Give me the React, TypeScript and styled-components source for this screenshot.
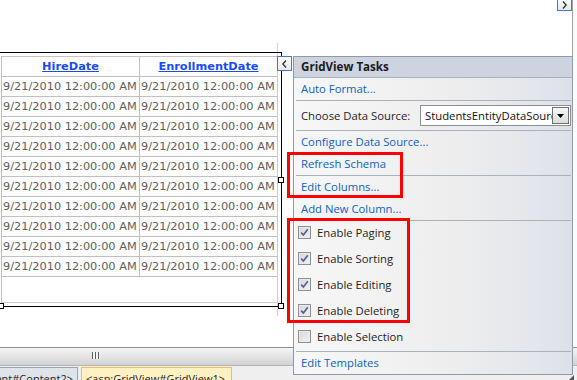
import React from "react";
import styled, { createGlobalStyle } from "styled-components";

const GlobalStyle = createGlobalStyle`
  html, body {
    margin: 0;
    padding: 0;
    background: #ffffff;
    overflow: hidden;
  }
`;

const ROWS = 10;
const DATE = "9/21/2010 12:00:00 AM";

const App: React.FunctionComponent = () => {
  return (
    <Window>
      <GlobalStyle />
      <Surface>
        <Canvas>
          <Guide />
          <Frame>
            <Table>
              <Row>
                <HeadCell>
                  <HeadLink>HireDate</HeadLink>
                </HeadCell>
                <HeadCell>
                  <HeadLink>EnrollmentDate</HeadLink>
                </HeadCell>
              </Row>
              {Array.from({ length: ROWS }).map((_, i) => (
                <Row key={i}>
                  <Cell>{DATE}</Cell>
                  <Cell>{DATE}</Cell>
                </Row>
              ))}
            </Table>
            <Handle $x="right" $y="middle" />
            <Handle $x="left" $y="bottom" />
            <Handle $x="right" $y="bottom" />
          </Frame>
          <ExpandButton>
            <Chevron dir="right" />
          </ExpandButton>
        </Canvas>
        <Gutter />
      </Surface>

      <HScroll>
        <Grip />
      </HScroll>

      <TabStrip>
        <Tab>
          <TabText>&lt;asp:Content#Content2&gt;</TabText>
        </Tab>
        <Tab $active>
          <TabText>&lt;asp:GridView#GridView1&gt;</TabText>
        </Tab>
      </TabStrip>

      <CollapseButton>
        <Chevron dir="left" />
      </CollapseButton>

      <TasksPanel>
        <PanelHeader>GridView Tasks</PanelHeader>
        <TaskLink>Auto Format...</TaskLink>
        <Separator />
        <SourceRow>
          <Label>Choose Data Source:</Label>
          <Combo>
            <ComboText>StudentsEntityDataSource</ComboText>
            <ComboButton>
              <svg width="7" height="4" viewBox="0 0 7 4">
                <path d="M0 0 H7 L3.5 4 Z" fill="#000" />
              </svg>
            </ComboButton>
          </Combo>
        </SourceRow>
        <Separator />
        <TaskLink>Configure Data Source...</TaskLink>
        <TaskLink>Refresh Schema</TaskLink>
        <Separator />
        <TaskLink>Edit Columns...</TaskLink>
        <TaskLink>Add New Column...</TaskLink>
        <Separator />
        <CheckList>
          <CheckOption label="Enable Paging" checked />
          <CheckOption label="Enable Sorting" checked />
          <CheckOption label="Enable Editing" checked />
          <CheckOption label="Enable Deleting" checked />
          <CheckOption label="Enable Selection" />
        </CheckList>
        <Separator />
        <TaskLink>Edit Templates</TaskLink>
      </TasksPanel>

      <RedBox $left={287} $top={152} $width={116} $height={46} />
      <RedBox $left={287} $top={218} $width={123} $height={105} />

      <ResizeCorner />
    </Window>
  );
};

const Chevron = ({ dir }: { dir: "left" | "right" }) => (
  <svg width="5" height="8" viewBox="0 0 5 8">
    <path
      d={dir === "left" ? "M4 0.5 L0.8 4 L4 7.5" : "M1 0.5 L4.2 4 L1 7.5"}
      fill="none"
      stroke="#2a2a2a"
      strokeWidth="1.2"
    />
  </svg>
);

const CheckOption = ({ label, checked }: { label: string; checked?: boolean }) => (
  <CheckRow>
    <CheckBox>
      {checked && (
        <svg width="9" height="9" viewBox="0 0 9 9">
          <path
            d="M1.2 4.6 L3.4 7 L7.8 1.2"
            fill="none"
            stroke="#4b5f98"
            strokeWidth="1.6"
          />
        </svg>
      )}
    </CheckBox>
    <CheckLabel>{label}</CheckLabel>
  </CheckRow>
);

const Window = styled.div`
  position: relative;
  width: 577px;
  height: 380px;
  overflow: hidden;
  display: flex;
  flex-direction: column;
  background: #ffffff;
`;

const Surface = styled.div`
  height: 347px;
  display: flex;
  flex-shrink: 0;
`;

const Canvas = styled.div`
  position: relative;
  width: 573px;
  border-right: 1px solid #a3a3a3;
  padding-top: 52px;
  box-sizing: border-box;
`;

const Gutter = styled.div`
  flex: 1;
  background: #fbfbfb;
`;

const Guide = styled.div`
  position: absolute;
  left: 277px;
  top: 43px;
  width: 1px;
  height: 273px;
  background: #dccaca;
`;

const Frame = styled.div`
  position: relative;
  width: 282px;
  height: 255px;
  box-sizing: border-box;
  border: 1px solid #000000;
  border-left: none;
  padding: 3px 0 0 1px;
`;

const Table = styled.div`
  width: 277px;
  height: 247px;
  box-sizing: border-box;
  border-top: 1px solid #cbc2c2;
  border-left: 1px solid #c0c0c0;
  border-right: 1px solid #d6c8c8;
  border-bottom: 1px solid #d6c8c8;
  font-family: "DejaVu Sans", Verdana, sans-serif;
  font-size: 11.33px;
`;

const Row = styled.div`
  display: grid;
  grid-template-columns: 138px 137px;
  height: 20px;
`;

const Cell = styled.div`
  box-sizing: border-box;
  border-bottom: 1px solid #c0c0c0;
  padding-left: 1px;
  line-height: 19px;
  color: #5e5e5e;
  white-space: nowrap;
  overflow: hidden;

  &:first-child {
    border-right: 1px solid #c0c0c0;
  }
`;

const HeadCell = styled(Cell)`
  text-align: center;
  padding-left: 0;
`;

const HeadLink = styled.span`
  color: #1a4cf5;
  font-weight: bold;
  text-decoration: underline;
`;

const Handle = styled.div<{ $x: "left" | "right"; $y: "middle" | "bottom" }>`
  position: absolute;
  width: 6px;
  height: 6px;
  box-sizing: border-box;
  border: 1px solid #000000;
  background: #ffffff;
  ${p => (p.$x === "right" ? "right: -3px;" : "left: -2px;")}
  ${p => (p.$y === "bottom" ? "bottom: -3px;" : "top: calc(50% - 3px);")}
`;

const ExpandButton = styled.div`
  position: absolute;
  left: 557px;
  top: -4px;
  width: 15px;
  height: 15px;
  box-sizing: border-box;
  border: 1px solid #4a78c0;
  background: linear-gradient(#ffffff, #e6e9ee);
  display: flex;
  align-items: center;
  justify-content: center;
  padding-top: 3px;
`;

const CollapseButton = styled.div`
  position: absolute;
  left: 277px;
  top: 56px;
  width: 15px;
  height: 15px;
  box-sizing: border-box;
  border: 1px solid #4a78c0;
  background: linear-gradient(#ffffff, #e6e9ee);
  display: flex;
  align-items: center;
  justify-content: center;
`;

const HScroll = styled.div`
  height: 19px;
  flex-shrink: 0;
  box-sizing: border-box;
  border-top: 1px solid #8e8e8e;
  border-bottom: 1px solid #b4b4b4;
  background: linear-gradient(#f4f4f4, #e4e4e4 50%, #d2d2d2);
  padding: 4px 0 0 92px;
`;

const Grip = styled.div`
  width: 8px;
  height: 7px;
  background: repeating-linear-gradient(
    to right,
    #5e5e5e 0,
    #5e5e5e 1px,
    #f4f4f4 1px,
    #f4f4f4 3px
  );
`;

const TabStrip = styled.div`
  flex: 1;
  display: flex;
  gap: 3px;
  background: #efefef;
  padding-top: 1px;
  font-family: "Open Sans", "Noto Sans", sans-serif;
  font-size: 11px;
  color: #1e1e1e;
`;

const Tab = styled.div<{ $active?: boolean }>`
  height: 22px;
  box-sizing: border-box;
  display: flex;
  justify-content: ${p => (p.$active ? "flex-start" : "flex-end")};
  overflow: hidden;
  white-space: nowrap;
  padding: 3px 4px 0 4px;
  border: 1px solid ${p => (p.$active ? "#e6c25a" : "#9da3ab")};
  background: ${p => (p.$active ? "#fff1c2" : "#dfe3ea")};
  width: ${p => (p.$active ? "151px" : "78px")};
  ${p => (p.$active ? "" : "border-left: none;")}
`;

const TabText = styled.span`
  flex-shrink: 0;
`;

const TasksPanel = styled.div`
  position: absolute;
  left: 293px;
  top: 56px;
  width: 280px;
  box-sizing: border-box;
  border: 1px solid #8e99ab;
  background: linear-gradient(
    to right,
    #f7f7f7 0%,
    #eeeeee 55%,
    #e6e8ec 80%,
    #dce1e9 100%
  );
  font-family: "Open Sans", "Noto Sans", sans-serif;
  font-size: 11.3px;
  color: #1e1e1e;
`;

const PanelHeader = styled.div`
  height: 21px;
  box-sizing: border-box;
  line-height: 20px;
  padding-left: 7px;
  background: #cdd4df;
  border-bottom: 1px solid #a8b1bf;
  font-weight: bold;
  font-size: 11.6px;
  color: #1b1b1b;
`;

const TaskLink = styled.div`
  height: 22px;
  line-height: 22px;
  padding-left: 7px;
  color: #0d63c6;
  white-space: nowrap;
`;

const Separator = styled.div`
  height: 1px;
  margin: 0 1px 0 2px;
  background: #a9b1bd;
`;

const SourceRow = styled.div`
  height: 29px;
  display: flex;
  align-items: center;
  padding: 0 1px 0 7px;
`;

const Label = styled.span`
  white-space: nowrap;
`;

const Combo = styled.div`
  margin-left: auto;
  width: 151px;
  height: 21px;
  box-sizing: border-box;
  border: 1px solid #8a8e96;
  background: #ffffff;
  display: flex;
  align-items: center;
  overflow: hidden;
  padding: 0 1px 0 4px;
`;

const ComboText = styled.span`
  flex: 1;
  overflow: hidden;
  white-space: nowrap;
  color: #111111;
`;

const ComboButton = styled.div`
  width: 17px;
  height: 17px;
  flex-shrink: 0;
  box-sizing: border-box;
  border: 1px solid #6f6f6f;
  background: linear-gradient(#f6f6f6, #dcdcdc);
  display: flex;
  align-items: center;
  justify-content: center;
`;

const CheckList = styled.div`
  display: flex;
  flex-direction: column;
  margin-top: -2px;
  padding-bottom: 2px;
`;

const CheckRow = styled.div`
  height: 26px;
  display: flex;
  align-items: center;
  gap: 6px;
  padding-left: 4px;
`;

const CheckBox = styled.div`
  width: 13px;
  height: 13px;
  box-sizing: border-box;
  border: 1px solid #8f8f8f;
  background: linear-gradient(135deg, #d6d6d6, #f2f2f2);
  box-shadow: inset 0 0 0 1px #eaeaea;
  display: flex;
  align-items: center;
  justify-content: center;
`;

const CheckLabel = styled.span`
  white-space: nowrap;
`;

const RedBox = styled.div<{ $left: number; $top: number; $width: number; $height: number }>`
  position: absolute;
  left: ${p => p.$left}px;
  top: ${p => p.$top}px;
  width: ${p => p.$width}px;
  height: ${p => p.$height}px;
  box-sizing: border-box;
  border: 3px solid #ff0000;
  pointer-events: none;
`;

const ResizeCorner = styled.div`
  position: absolute;
  left: 569px;
  top: 375px;
  width: 0;
  height: 0;
  border-left: 5px solid transparent;
  border-bottom: 5px solid #555555;
`;

export default App;
